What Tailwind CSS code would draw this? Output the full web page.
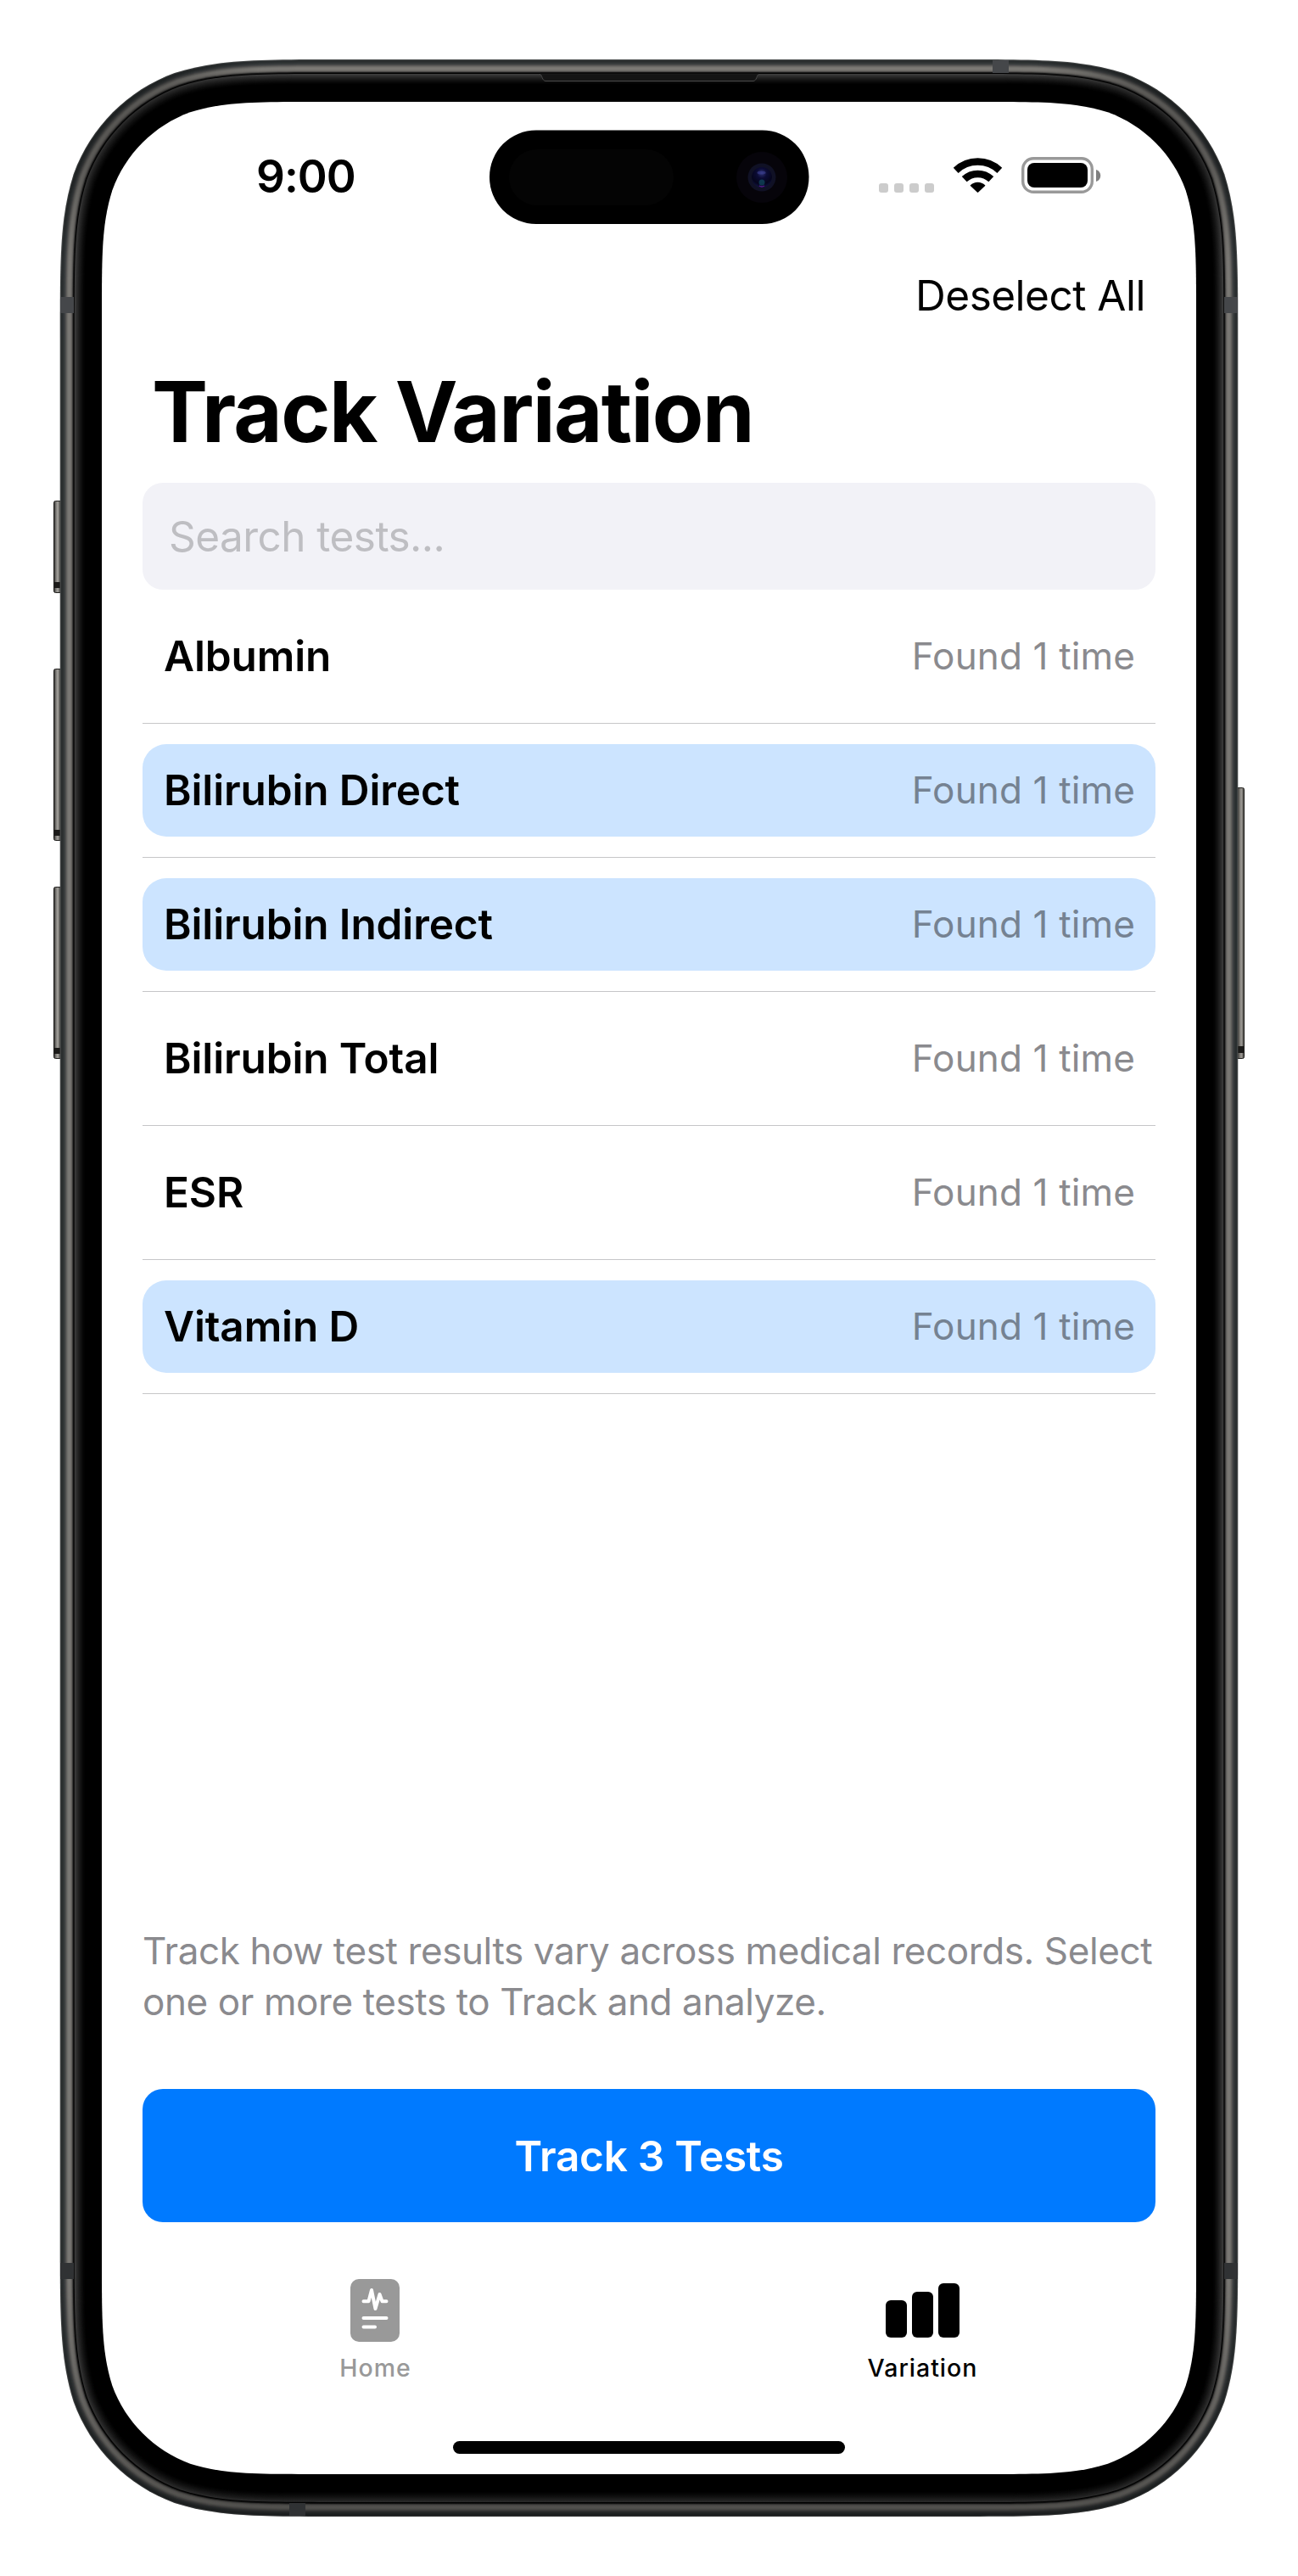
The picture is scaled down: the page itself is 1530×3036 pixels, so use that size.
<!DOCTYPE html>
<html lang="en">
<head>
<meta charset="utf-8">
<title>Track Variation</title>
<script src="https://cdn.jsdelivr.net/npm/@tailwindcss/browser@4"></script>
</head>
<body class="bg-white">
<div class="relative w-[1530px] h-[3036px] overflow-hidden p-[120px] font-['Inter',sans-serif] text-black">
  <svg class="absolute inset-0" width="1530" height="3036" viewBox="0 0 1530 3036" aria-hidden="true">
    <defs>
      <linearGradient id="btnL"><stop offset="0" stop-color="#1c1c1a"/><stop offset=".2" stop-color="#6d6b67"/><stop offset=".45" stop-color="#a8a6a1"/><stop offset=".75" stop-color="#4a4844"/><stop offset="1" stop-color="#1e1d1b"/></linearGradient>
      <linearGradient id="btnR"><stop offset="0" stop-color="#1e1d1b"/><stop offset=".25" stop-color="#4a4844"/><stop offset=".65" stop-color="#a09d98"/><stop offset=".85" stop-color="#6d6b66"/><stop offset="1" stop-color="#1c1c1a"/></linearGradient>
      <linearGradient id="shade" x1="0" y1="0" x2="0" y2="1"><stop offset="0" stop-color="#000" stop-opacity="0"/><stop offset=".9" stop-color="#000" stop-opacity="0"/><stop offset="1" stop-color="#000" stop-opacity=".35"/></linearGradient>
      <radialGradient id="cTL" gradientUnits="userSpaceOnUse" cx="125" cy="125" r="190"><stop offset="0" stop-color="#000" stop-opacity=".3"/><stop offset=".4" stop-color="#000" stop-opacity=".25"/><stop offset="1" stop-color="#000" stop-opacity="0"/></radialGradient>
      <radialGradient id="cTR" gradientUnits="userSpaceOnUse" cx="1405" cy="125" r="190"><stop offset="0" stop-color="#000" stop-opacity=".3"/><stop offset=".4" stop-color="#000" stop-opacity=".25"/><stop offset="1" stop-color="#000" stop-opacity="0"/></radialGradient>
      <radialGradient id="lens" cx=".5" cy=".3" r=".7"><stop offset="0" stop-color="#2c2f70"/><stop offset=".35" stop-color="#0b0b34"/><stop offset=".75" stop-color="#05051c"/><stop offset="1" stop-color="#101240"/></radialGradient>
    </defs>
    <g>
      <g fill="url(#btnL)" stroke="#22211f" stroke-width="1">
        <rect x="63.500" y="590.500" width="10" height="108" rx="2"/><rect x="63.500" y="788.500" width="10" height="202" rx="2"/><rect x="63.500" y="1045.500" width="10" height="202" rx="2"/>
      </g>
      <rect x="1457" y="928.500" width="9.500" height="319" rx="2" fill="url(#btnR)" stroke="#22211f"/>
      <g fill="#1b1a18"><rect x="64" y="686" width="8" height="7"/><rect x="64" y="978" width="8" height="7"/><rect x="64" y="1235" width="8" height="7"/><rect x="1459" y="1233" width="7" height="8"/></g>
    </g>
    <g id="shell"></g>
    <path class="shade" fill="url(#shade)"/>
    <path class="shade" fill="url(#cTL)"/>
    <path class="shade" fill="url(#cTR)"/>
    <g fill="#45474a">
      <rect x="71" y="350" width="16" height="19"/><rect x="1443" y="350" width="16" height="19"/>
      <rect x="71" y="2667" width="16" height="19" fill="#303234"/><rect x="1443" y="2667" width="16" height="19" fill="#303234"/>
      <rect x="1170" y="71" width="19" height="15"/><rect x="341" y="2950" width="19" height="15" fill="#303234"/>
    </g>
    <path d="M636 87.500 H637 C639 89 639 95 643 95.500 H888 C892 95 892 89 894 87.500" fill="#141414" stroke="#4a4a4a"/>
    <path d="M637 86.500H894" stroke="#0a0a0a" stroke-width="2"/>
    <path id="screen" fill="#fff"/>
  </svg>

  <main class="relative flex h-[2796px] w-[1290px] flex-col">
    <header class="flex h-[177px] items-start">
      <div class="w-[457px] pl-[182px] pt-[58px] text-[53px] font-semibold leading-[60px] tracking-[-1px]">9:00</div>
      <div class="mt-[33px] h-[111px] w-[377px]">
        <svg width="377" height="111" viewBox="0 0 377 111" class="block">
          <rect y=".5" width="376.500" height="110.500" rx="55" fill="#000"/>
          <rect x="23" y="23" width="194" height="66" rx="33" fill="#040404"/>
          <circle cx="321" cy="56" r="30" fill="#06040a"/>
          <circle cx="321" cy="56" r="16.500" fill="#101125"/>
          <circle cx="321" cy="56" r="12" fill="url(#lens)"/>
          <ellipse cx="320.500" cy="50.500" rx="5" ry="2" fill="#4347a0" opacity=".5"/>
          <circle cx="321" cy="62" r="3.500" fill="#12566a" opacity=".6"/>
          <path d="M318 66q3 2 6 0" stroke="#5a1a8a" stroke-width="1.500" fill="none"/>
        </svg>
      </div>
      <svg class="ml-[82px] mt-[65px]" width="264" height="43" viewBox="0 0 264 43">
        <g fill="#ccc"><rect y="31" width="11" height="11" rx="3"/><rect x="18" y="31" width="11" height="11" rx="3"/><rect x="36" y="31" width="11" height="11" rx="3"/><rect x="54" y="31" width="11" height="11" rx="3"/></g>
        <g transform="translate(88 0)">
          <path d="M2.700 15.800A37.500 37.500 0 0 1 54.300 15.800" stroke="#000" stroke-width="8.500" fill="none"/>
          <path d="M12.700 26.200A23 23 0 0 1 44.300 26.200" stroke="#000" stroke-width="8.500" fill="none"/>
          <path d="M19.800 33.300A12.500 12.500 0 0 1 37.200 33.300Q37.400 33.700 37.200 33.900L29.200 41.600Q28.500 42.200 27.800 41.600L19.800 33.900Q19.600 33.600 19.800 33.300Z"/>
        </g>
        <rect x="169.700" y="1.700" width="81.600" height="39.600" rx="12.500" fill="none" stroke="#999" stroke-width="3.400"/>
        <rect x="175" y="7" width="71" height="29" rx="8"/>
        <path d="M256 15C263 17 263 27 256 29Z" fill="#808080"/>
      </svg>
    </header>

    <div class="flex h-[104px] justify-end pr-[60px] pt-[21px] text-[49.500px] leading-[60px] tracking-[-0.500px]">Deselect All</div>

    <h1 class="h-[168px] pl-[59px] pt-[24px] text-[99px] font-bold leading-[120px] tracking-[-1.550px]">Track Variation</h1>

    <section class="flex flex-col px-[48px]">
      <div class="flex h-[126px] items-center rounded-[24px] bg-[#f2f2f7] px-[31px] pt-px text-[49.500px] tracking-[-0.550px] text-[#bebec2]">Search tests...</div>
      <ul class="flex flex-col text-[49.500px] font-semibold tracking-[-0.120px]">
        <li class="h-[158px] border-b border-[#c6c6c8] py-6"><div class="flex h-[109px] items-center justify-between rounded-[28px] pl-[25px] pr-6"><span>Albumin</span><span class="-mt-0.5 text-[44px] font-normal tracking-[0.150px] text-[#8a8a8e]">Found 1 time</span></div></li>
        <li class="h-[158px] border-b border-[#c6c6c8] py-6"><div class="flex h-[109px] items-center justify-between rounded-[28px] bg-[#cce4ff] pl-[25px] pr-6"><span>Bilirubin Direct</span><span class="-mt-0.5 text-[44px] font-normal tracking-[0.150px] text-[#758292]">Found 1 time</span></div></li>
        <li class="h-[158px] border-b border-[#c6c6c8] py-6"><div class="flex h-[109px] items-center justify-between rounded-[28px] bg-[#cce4ff] pl-[25px] pr-6"><span>Bilirubin Indirect</span><span class="-mt-0.5 text-[44px] font-normal tracking-[0.150px] text-[#758292]">Found 1 time</span></div></li>
        <li class="h-[158px] border-b border-[#c6c6c8] py-6"><div class="flex h-[109px] items-center justify-between rounded-[28px] pl-[25px] pr-6"><span>Bilirubin Total</span><span class="-mt-0.5 text-[44px] font-normal tracking-[0.150px] text-[#8a8a8e]">Found 1 time</span></div></li>
        <li class="h-[158px] border-b border-[#c6c6c8] py-6"><div class="flex h-[109px] items-center justify-between rounded-[28px] pl-[25px] pr-6"><span>ESR</span><span class="-mt-0.5 text-[44px] font-normal tracking-[0.150px] text-[#8a8a8e]">Found 1 time</span></div></li>
        <li class="h-[158px] border-b border-[#c6c6c8] py-6"><div class="flex h-[109px] items-center justify-between rounded-[28px] bg-[#cce4ff] pl-[25px] pr-6"><span>Vitamin D</span><span class="-mt-0.5 text-[44px] font-normal tracking-[0.150px] text-[#758292]">Found 1 time</span></div></li>
      </ul>
    </section>

    <section class="mt-auto flex flex-col px-[48px]">
      <p class="whitespace-nowrap text-[44px] leading-[60px] tracking-[-0.400px] text-[#8a8a8e]">Track how test results vary across medical records. Select<br>one or more tests to Track and analyze.</p>
      <button class="mt-[73px] h-[157px] rounded-[24px] bg-[#007aff] pt-px text-[49.500px] font-semibold tracking-[-0.250px] text-white">Track 3 Tests</button>
    </section>

    <nav class="grid h-[297px] grid-cols-2 text-[28.500px] font-medium leading-[36px] tracking-[1px]">
      <div class="flex flex-col items-center pr-px pt-[67px] text-[#999]">
        <svg width="58" height="74" viewBox="0 0 58 74"><rect width="58" height="74" rx="10" fill="#999"/><g fill="none" stroke="#fff" stroke-width="4" stroke-linecap="round" stroke-linejoin="round"><path d="M15.500 26.300H21.500L25 13L29.500 35L34.500 18L37.500 26.300H42.500"/><path d="M15.500 46H42.500M15.500 56.500H29"/></g></svg>
        <span class="mt-[13px] pl-px">Home</span>
      </div>
      <div class="flex flex-col items-center pr-px pt-[67px]">
        <svg width="87" height="74" viewBox="0 0 87 74"><rect y="25" width="25" height="44" rx="6"/><rect x="31" y="15" width="25" height="54" rx="6"/><rect x="62" y="5" width="25" height="64" rx="6"/></svg>
        <span class="mt-[13px] pl-px">Variation</span>
      </div>
    </nav>
    <div class="absolute bottom-[24px] left-1/2 h-[15px] w-[462px] -translate-x-1/2 rounded-full bg-black"></div>
  </main>
</div>
<script>
  // Continuous-curvature rounded rectangle.
  function squircle(x, y, w, h, r) {
    const a = 1.52866 * r, b = 1.08849 * r, c = 0.86841 * r, d = 0.63149 * r, e = 0.07491 * r, f = 0.37282 * r, g = 0.16906 * r;
    const X = x + w, Y = y + h;
    return `M${x + a} ${y}H${X - a}C${X - b} ${y} ${X - c} ${y} ${X - d} ${y + e}C${X - f} ${y + g} ${X - g} ${y + f} ${X - e} ${y + d}C${X} ${y + c} ${X} ${y + b} ${X} ${y + a}` +
      `V${Y - a}C${X} ${Y - b} ${X} ${Y - c} ${X - e} ${Y - d}C${X - g} ${Y - f} ${X - f} ${Y - g} ${X - d} ${Y - e}C${X - c} ${Y} ${X - b} ${Y} ${X - a} ${Y}` +
      `H${x + a}C${x + b} ${Y} ${x + c} ${Y} ${x + d} ${Y - e}C${x + f} ${Y - g} ${x + g} ${Y - f} ${x + e} ${Y - d}C${x} ${Y - c} ${x} ${Y - b} ${x} ${Y - a}` +
      `V${y + a}C${x} ${y + b} ${x} ${y + c} ${x + e} ${y + d}C${x + g} ${y + f} ${x + f} ${y + g} ${x + d} ${y + e}C${x + c} ${y} ${x + b} ${y} ${x + a} ${y}Z`;
  }
  // Metal rim and bezel, one colour per pixel of depth.
  const rim = ['#4c4f4f', '#2b2f30', '#2a2e2f', '#2e3233', '#343839', '#3c3f40', '#4a4b4b', '#5c5b59', '#6b6a67', '#767571', '#7c7a76', '#7a7874', '#767470', '#696764', '#4c4b49', '#1a1a1a', '#000', '#3c3c3c', '#363636', '#2f2f2f', '#292929', '#232323', '#1d1d1d', '#181818', '#131313', '#0e0e0e', '#0a0a0a', '#060606', '#030303', '#000'];
  const outer = [70.7, 70, 1388.6, 2896, 214];
  document.getElementById('shell').innerHTML = rim.map((c, i) =>
    `<path fill="${c}" d="${squircle(outer[0] + i, outer[1] + i, outer[2] - 2 * i, outer[3] - 2 * i, outer[4] - i)}"/>`).join('');
  document.querySelectorAll('.shade').forEach(p => p.setAttribute('d', squircle(...outer)));
  document.getElementById('screen').setAttribute('d', squircle(120, 120, 1290, 2796, 165));
</script>
</body>
</html>
